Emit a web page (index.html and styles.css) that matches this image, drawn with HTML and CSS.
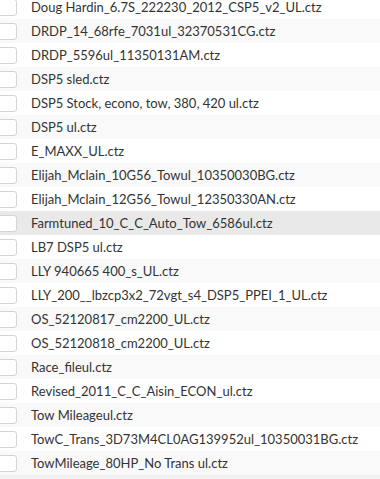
FILE: index.html
```html
<!DOCTYPE html>
<html lang="en">

<head>
    <meta charset="UTF-8">
    <meta name="viewport" content="width=device-width, initial-scale=1.0">
    <title>Tune Files</title>
    <link rel="stylesheet" href="styles.css">
</head>

<body>

    <ul class="file-list">
        <li class="file-row"><span class="pick"></span><span class="name">Doug Hardin_6.7S_222230_2012_CSP5_v2_UL.ctz</span></li>
        <li class="file-row"><span class="pick"></span><span class="name">DRDP_14_68rfe_7031ul_32370531CG.ctz</span></li>
        <li class="file-row"><span class="pick"></span><span class="name">DRDP_5596ul_11350131AM.ctz</span></li>
        <li class="file-row"><span class="pick"></span><span class="name">DSP5 sled.ctz</span></li>
        <li class="file-row"><span class="pick"></span><span class="name">DSP5 Stock, econo, tow, 380, 420 ul.ctz</span></li>
        <li class="file-row"><span class="pick"></span><span class="name">DSP5 ul.ctz</span></li>
        <li class="file-row"><span class="pick"></span><span class="name">E_MAXX_UL.ctz</span></li>
        <li class="file-row"><span class="pick"></span><span class="name">Elijah_Mclain_10G56_Towul_10350030BG.ctz</span></li>
        <li class="file-row"><span class="pick"></span><span class="name">Elijah_Mclain_12G56_Towul_12350330AN.ctz</span></li>
        <li class="file-row hover"><span class="pick"></span><span class="name">Farmtuned_10_C_C_Auto_Tow_6586ul.ctz</span></li>
        <li class="file-row"><span class="pick"></span><span class="name">LB7 DSP5 ul.ctz</span></li>
        <li class="file-row"><span class="pick"></span><span class="name">LLY 940665 400_s_UL.ctz</span></li>
        <li class="file-row"><span class="pick"></span><span class="name">LLY_200__lbzcp3x2_72vgt_s4_DSP5_PPEI_1_UL.ctz</span></li>
        <li class="file-row"><span class="pick"></span><span class="name">OS_52120817_cm2200_UL.ctz</span></li>
        <li class="file-row"><span class="pick"></span><span class="name">OS_52120818_cm2200_UL.ctz</span></li>
        <li class="file-row"><span class="pick"></span><span class="name">Race_fileul.ctz</span></li>
        <li class="file-row"><span class="pick"></span><span class="name">Revised_2011_C_C_Aisin_ECON_ul.ctz</span></li>
        <li class="file-row"><span class="pick"></span><span class="name">Tow Mileageul.ctz</span></li>
        <li class="file-row"><span class="pick"></span><span class="name">TowC_Trans_3D73M4CL0AG139952ul_10350031BG.ctz</span></li>
        <li class="file-row"><span class="pick"></span><span class="name">TowMileage_80HP_No Trans ul.ctz</span></li>
        <li class="file-row footer"></li>
    </ul>

</body>

</html>
```

FILE: styles.css
```css
body {
    margin: 0;
    font-family: Lato, "Open Sans", sans-serif;
    background-color: #fff;
    overflow: hidden;
}

.file-list {
    list-style: none;
    margin: -5px 0 0;
    padding: 0;
}

.file-row {
    display: flex;
    align-items: center;
    height: 24px;
    background-color: #fff;
}

.file-row:nth-child(even) {
    background-color: #f9f9f9;
}

.file-row.hover {
    background-color: #e9e9e9;
}

.file-row.footer {
    background-color: #f1f1f1;
}

.pick {
    flex: none;
    width: 26px;
    height: 15px;
    margin-left: -11px;
    border: 1px solid #d4d4d4;
    border-radius: 3px;
    background-color: #fff;
}

.name {
    margin-left: 14px;
    font-size: 13px;
    color: #333;
    white-space: nowrap;
}
```
